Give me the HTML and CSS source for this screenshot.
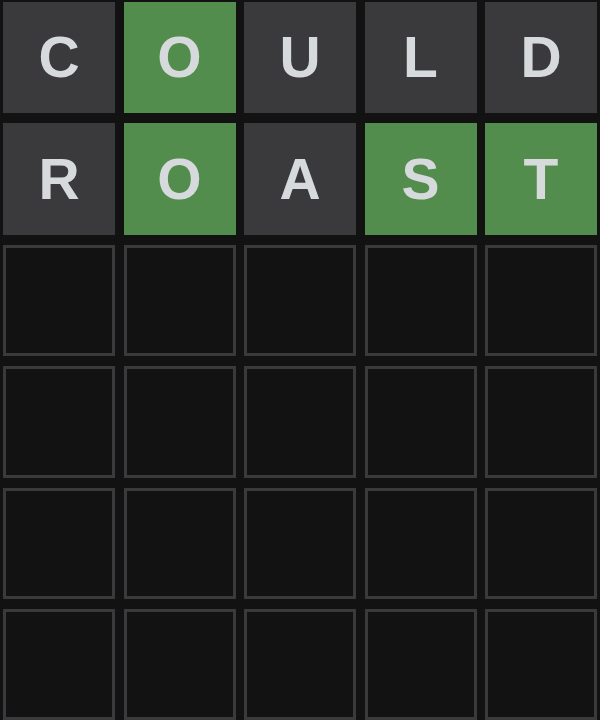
FILE: index.html
```html
<!DOCTYPE html>
<html>
<head>
<meta charset="utf-8">
<link rel="stylesheet" href="styles.css">
</head>
<body>
<div class="board">
  <div class="tile absent">C</div>
  <div class="tile correct">O</div>
  <div class="tile absent">U</div>
  <div class="tile absent">L</div>
  <div class="tile absent">D</div>
  <div class="tile absent">R</div>
  <div class="tile correct">O</div>
  <div class="tile absent">A</div>
  <div class="tile correct">S</div>
  <div class="tile correct">T</div>
  <div class="tile empty"></div><div class="tile empty"></div><div class="tile empty"></div><div class="tile empty"></div><div class="tile empty"></div>
  <div class="tile empty"></div><div class="tile empty"></div><div class="tile empty"></div><div class="tile empty"></div><div class="tile empty"></div>
  <div class="tile empty"></div><div class="tile empty"></div><div class="tile empty"></div><div class="tile empty"></div><div class="tile empty"></div>
  <div class="tile empty"></div><div class="tile empty"></div><div class="tile empty"></div><div class="tile empty"></div><div class="tile empty"></div>
</div>
</body>
</html>
```
FILE: styles.css
```css
html, body {
  margin: 0;
  padding: 0;
  background: #121213;
  overflow: hidden;
}
.board {
  box-sizing: border-box;
  width: 600px;
  padding: 2px 3px 0 3px;
  display: grid;
  grid-template-columns: repeat(5, 112px);
  grid-auto-rows: 111.4px;
  column-gap: 8.5px;
  row-gap: 10px;
}
.tile {
  box-sizing: border-box;
  display: flex;
  align-items: center;
  justify-content: center;
  font-family: "Liberation Sans", Arial, sans-serif;
  font-weight: bold;
  font-size: 57px;
  color: #d7dadc;
  line-height: 1;
}
.absent { background: #3a3a3c; }
.correct { background: #538d4e; }
.empty { border: 3px solid #3a3a3c; background: #121213; }
```
